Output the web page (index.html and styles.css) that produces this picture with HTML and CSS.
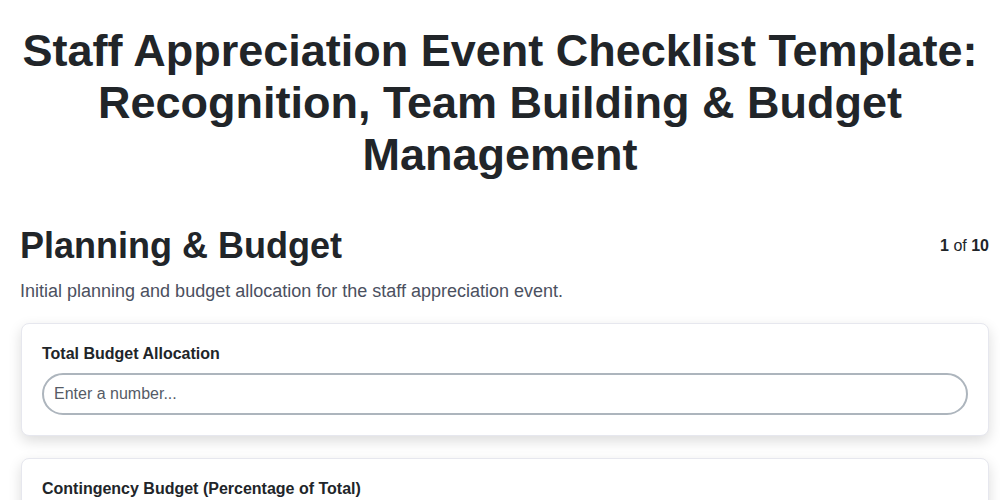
FILE: index.html
```html
<!DOCTYPE html>
<html lang="en">
<head>
<meta charset="UTF-8">
<meta name="viewport" content="width=device-width, initial-scale=1.0">
<title>Staff Appreciation Event Checklist</title>
<link rel="stylesheet" href="styles.css">
</head>
<body>

<header class="top">
  <h1 class="title">Staff Appreciation Event Checklist Template: Recognition, Team Building &amp; Budget Management</h1>
</header>

<main class="page">
  <div class="section-head">
    <h2 class="section-title">Planning &amp; Budget</h2>
    <div class="step"><b>1</b> of <b>10</b></div>
  </div>
  <p class="section-desc">Initial planning and budget allocation for the staff appreciation event.</p>

  <div class="card">
    <label class="field-label" for="total">Total Budget Allocation</label>
    <input class="field-input" id="total" type="number" placeholder="Enter a number...">
  </div>

  <div class="card">
    <label class="field-label" for="contingency">Contingency Budget (Percentage of Total)</label>
    <input class="field-input" id="contingency" type="number" placeholder="Enter a number...">
  </div>
</main>

</body>
</html>
```

FILE: styles.css
```css
body, html {
  margin: 0;
  padding: 0;
  background: #fff;
  color: #212529;
  font-family: "Liberation Sans", Arial, sans-serif;
}

.top {
  padding: 25px 20px 0;
}

.title {
  margin: 0;
  font-size: 45px;
  line-height: 52px;
  text-align: center;
}

.page {
  padding: 43px 11px 20px 20px;
}

.section-head {
  display: flex;
  justify-content: space-between;
  align-items: center;
}

.section-title {
  margin: 0;
  font-size: 36px;
  line-height: 44px;
}

.step {
  font-size: 16px;
  color: #212529;
}

.section-desc {
  margin: 11px 0 20px;
  font-size: 18px;
  line-height: 24px;
  color: #4b5060;
}

.card {
  background: #fff;
  border: 1px solid #e6e7ee;
  border-radius: 8px;
  box-shadow: 0 5px 14px rgba(0, 0, 0, 0.14);
  padding: 21px 20px 20px;
  margin: 0 0 22px 1px;
  display: flex;
  flex-direction: column;
}

.field-label {
  font-weight: bold;
  font-size: 16px;
  line-height: 18px;
  margin-bottom: 10px;
}

.field-input {
  font-family: inherit;
  font-size: 16px;
  height: 42px;
  box-sizing: border-box;
  border: 2px solid #adb5bd;
  border-radius: 21px;
  padding: 0 10px;
  color: #212529;
  outline: none;
}

.field-input::placeholder {
  color: #555b66;
}
```
